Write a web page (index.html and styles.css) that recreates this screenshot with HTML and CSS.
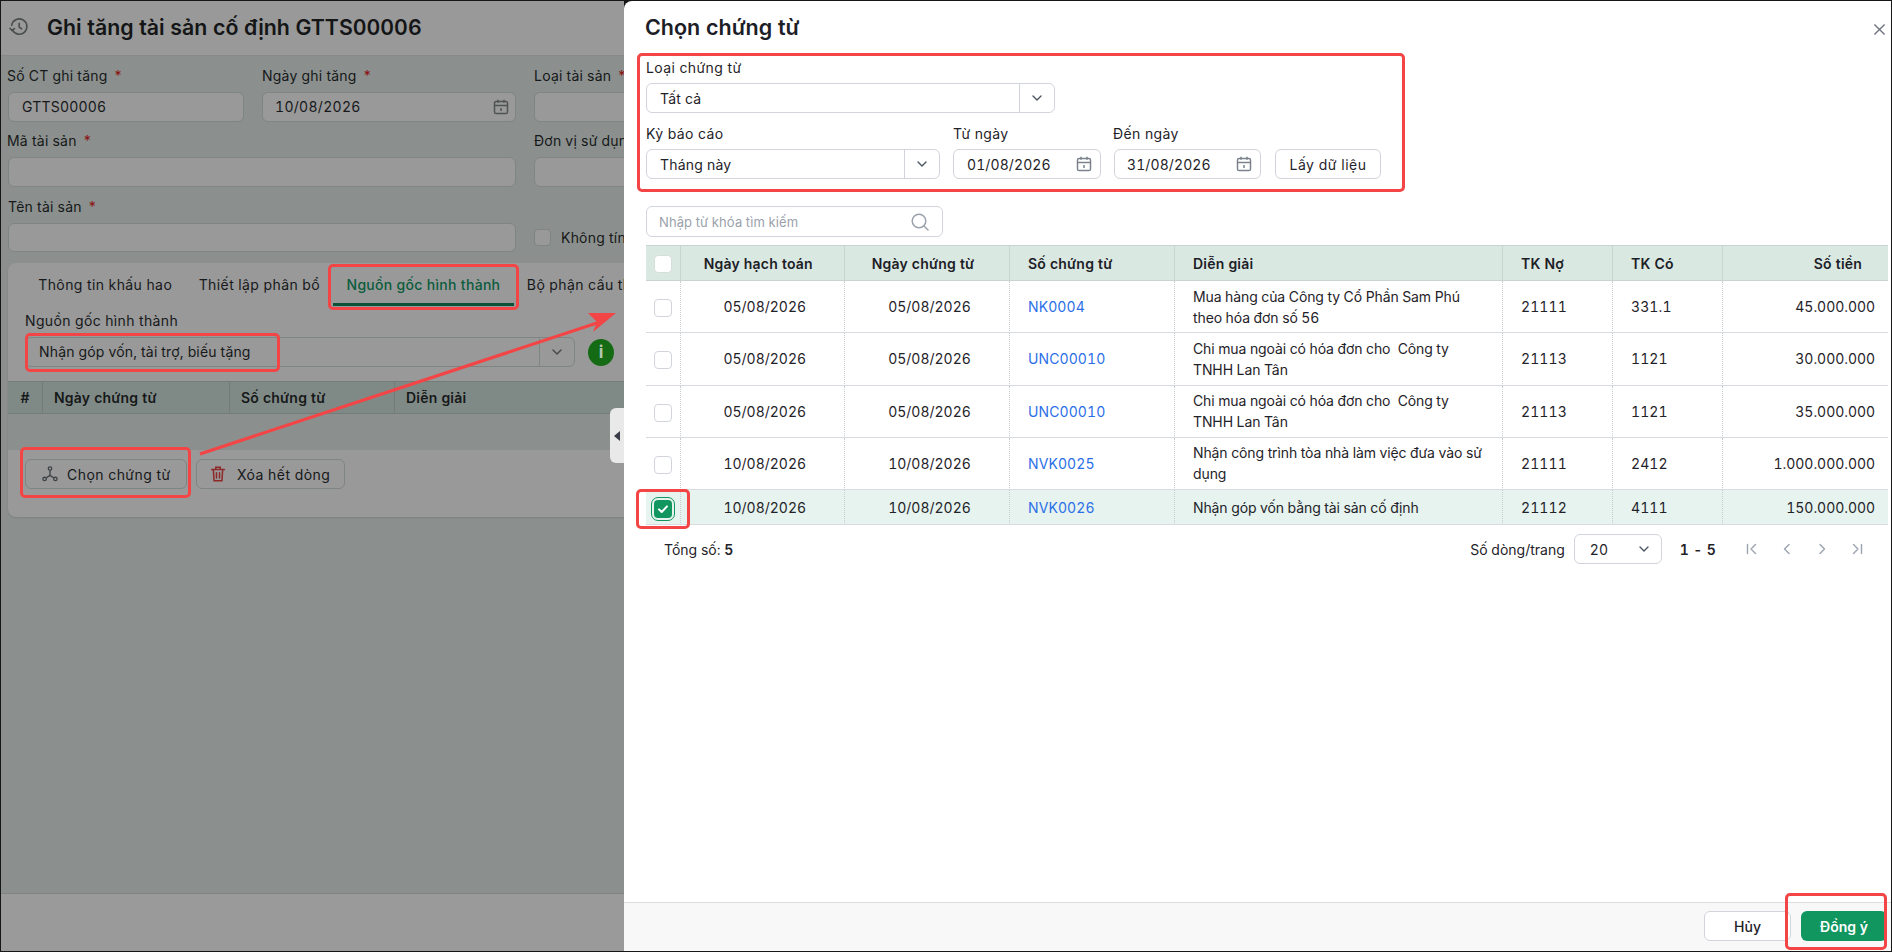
FILE: index.html
```html
<!DOCTYPE html>
<html lang="vi">
<head>
<meta charset="utf-8">
<title>Ghi tăng tài sản cố định</title>
<link rel="stylesheet" href="styles.css">
</head>
<body>
<div class="screen">
  <div class="shell">
    <section class="page">
      <header class="page-head">
        <svg class="history" viewBox="0 0 24 24" fill="none" stroke="#4a4d4d" stroke-width="1.9" stroke-linecap="round" stroke-linejoin="round"><path d="M4 15.500A9.200 9.200 0 1 0 3.200 10"/><path d="M1.200 13.500 3.600 16l3-2"/><path d="M12.200 7.500V12l3 2.200"/></svg>
        <h1>Ghi tăng tài sản cố định GTTS00006</h1>
      </header>
      <div class="page-body">
        <div class="form">
          <div class="field first"><label>Số CT ghi tăng <b>*</b></label><div class="box">GTTS00006</div></div>
          <div class="field"><label>Ngày ghi tăng <b>*</b></label><div class="box box-date"><span>10/08/2026</span>
            <svg class="cal" viewBox="0 0 16 16" fill="none" stroke="#4f5354" stroke-width="1.500"><rect x="1.500" y="2.500" width="13" height="12" rx="1.600"/><path d="M1.500 6.400h13M5 .8v3M11 .8v3M8 9v3"/></svg></div></div>
          <div class="field"><label>Loại tài sản <b>*</b></label><div class="box"></div></div>
          <div class="field first span2"><label>Mã tài sản <b>*</b></label><div class="box"></div></div>
          <div class="field"><label>Đơn vị sử dụng <b>*</b></label><div class="box"></div></div>
          <div class="field span2 r3"><label>Tên tài sản <b>*</b></label><div class="box"></div></div>
          <div class="check-line"><span class="dim-check"></span><span>Không tính khấu hao</span></div>
        </div>
        <div class="card">
          <nav class="tabs">
            <span class="tab">Thông tin khấu hao</span>
            <span class="tab">Thiết lập phân bổ</span>
            <span class="tab tab-on">Nguồn gốc hình thành</span>
            <span class="tab">Bộ phận cấu thành</span>
          </nav>
          <div class="origin">
            <label>Nguồn gốc hình thành</label>
            <div class="origin-line">
              <div class="box combo">
                <span class="combo-text">Nhận góp vốn, tài trợ, biếu tặng</span>
                <span class="combo-arrow"><svg viewBox="0 0 12 12" fill="none" stroke="#44484a" stroke-width="1.400" stroke-linecap="round" stroke-linejoin="round"><path d="M2 4l4 4 4-4"/></svg></span>
              </div>
              <span class="info">i</span>
            </div>
          </div>
          <div class="mini-head"><span class="mini-c">#</span><span>Ngày chứng từ</span><span>Số chứng từ</span><span>Diễn giải</span></div>
          <div class="mini-empty"></div>
          <div class="card-foot">
            <button class="dim-btn btn-choose"><svg viewBox="0 0 20 20" fill="none" stroke="#3f4346" stroke-width="1.500"><circle cx="10" cy="4" r="1.900"/><circle cx="4" cy="15.500" r="1.900"/><circle cx="16" cy="15.500" r="1.900"/><path d="M10 6v5.500M10 11.500l-4.400 2.900M10 11.500l4.400 2.900"/></svg>Chọn chứng từ</button>
            <button class="dim-btn btn-clear"><svg viewBox="0 0 20 20" fill="none" stroke="#8f2a2a" stroke-width="1.700" stroke-linecap="round"><path d="M3 5h14M7.500 5V2.600h5V5M4.800 5l.8 12.400h8.800L15.200 5M8.300 8.500v6M11.700 8.500v6"/></svg>Xóa hết dòng</button>
          </div>
        </div>
      </div>
      <footer class="page-foot"></footer>
    </section>

    <section class="drawer">
      <header class="drawer-head">
        <h2>Chọn chứng từ</h2>
        <svg class="close" viewBox="0 0 14 14" fill="none" stroke="#6f7480" stroke-width="1.500"><path d="M1.500 1.500l11 11M12.500 1.500l-11 11"/></svg>
      </header>
      <div class="drawer-body">
        <div class="filters">
          <div class="field-d wide1"><label>Loại chứng từ</label>
            <div class="input sel"><span>Tất cả</span><i class="sel-arrow"><svg viewBox="0 0 12 12" fill="none" stroke="#4b5563" stroke-width="1.400" stroke-linecap="round" stroke-linejoin="round"><path d="M2 4l4 4 4-4"/></svg></i></div>
          </div>
          <div class="filter-row">
            <div class="field-d wide2"><label>Kỳ báo cáo</label>
              <div class="input sel"><span>Tháng này</span><i class="sel-arrow"><svg viewBox="0 0 12 12" fill="none" stroke="#4b5563" stroke-width="1.400" stroke-linecap="round" stroke-linejoin="round"><path d="M2 4l4 4 4-4"/></svg></i></div>
            </div>
            <div class="field-d date"><label>Từ ngày</label>
              <div class="input dt"><span>01/08/2026</span><svg class="cal" viewBox="0 0 16 16" fill="none" stroke="#7b828c" stroke-width="1.500"><rect x="1.500" y="2.500" width="13" height="12" rx="1.600"/><path d="M1.500 6.400h13M5 .8v3M11 .8v3M8 9v3"/></svg></div>
            </div>
            <div class="field-d date date2"><label>Đến ngày</label>
              <div class="input dt"><span>31/08/2026</span><svg class="cal" viewBox="0 0 16 16" fill="none" stroke="#7b828c" stroke-width="1.500"><rect x="1.500" y="2.500" width="13" height="12" rx="1.600"/><path d="M1.500 6.400h13M5 .8v3M11 .8v3M8 9v3"/></svg></div>
            </div>
            <button class="btn-get">Lấy dữ liệu</button>
          </div>
        </div>
        <div class="search"><span>Nhập từ khóa tìm kiếm</span><svg viewBox="0 0 20 20" fill="none" stroke="#9aa1ab" stroke-width="1.500" stroke-linecap="round"><circle cx="9" cy="9" r="6.800"/><path d="M14 14l4 4"/></svg></div>
        <table class="grid">
          <colgroup><col class="c0"><col class="c1"><col class="c2"><col class="c3"><col class="c4"><col class="c5"><col class="c6"><col class="c7"></colgroup>
          <thead>
            <tr><th class="ck"><span class="box-ck head-ck"></span></th><th class="ctr">Ngày hạch toán</th><th class="ctr">Ngày chứng từ</th><th>Số chứng từ</th><th>Diễn giải</th><th>TK Nợ</th><th>TK Có</th><th class="rt">Số tiền</th></tr>
          </thead>
          <tbody>
            <tr><td class="ck"><span class="box-ck"></span></td><td class="ctr">05/08/2026</td><td class="ctr">05/08/2026</td><td><a>NK0004</a></td><td class="desc">Mua hàng của Công ty Cổ Phần Sam Phú<br>theo hóa đơn số 56</td><td>21111</td><td>331.1</td><td class="rt">45.000.000</td></tr>
            <tr><td class="ck"><span class="box-ck"></span></td><td class="ctr">05/08/2026</td><td class="ctr">05/08/2026</td><td><a>UNC00010</a></td><td class="desc">Chi mua ngoài có hóa đơn cho&nbsp; Công ty<br>TNHH Lan Tân</td><td>21113</td><td>1121</td><td class="rt">30.000.000</td></tr>
            <tr><td class="ck"><span class="box-ck"></span></td><td class="ctr">05/08/2026</td><td class="ctr">05/08/2026</td><td><a>UNC00010</a></td><td class="desc">Chi mua ngoài có hóa đơn cho&nbsp; Công ty<br>TNHH Lan Tân</td><td>21113</td><td>1121</td><td class="rt">35.000.000</td></tr>
            <tr><td class="ck"><span class="box-ck"></span></td><td class="ctr">10/08/2026</td><td class="ctr">10/08/2026</td><td><a>NVK0025</a></td><td class="desc">Nhận công trình tòa nhà làm việc đưa vào sử<br>dụng</td><td>21111</td><td>2412</td><td class="rt">1.000.000.000</td></tr>
            <tr class="picked"><td class="ck"><span class="box-ck on"><svg viewBox="0 0 14 14" fill="none" stroke="#fff" stroke-width="2" stroke-linecap="round" stroke-linejoin="round"><path d="M3 7.400l2.700 2.600L11 4.400"/></svg></span></td><td class="ctr">10/08/2026</td><td class="ctr">10/08/2026</td><td><a>NVK0026</a></td><td class="desc">Nhận góp vốn bằng tài sản cố định</td><td>21112</td><td>4111</td><td class="rt">150.000.000</td></tr>
          </tbody>
        </table>
        <div class="pager">
          <div class="total">Tổng số: <b>5</b></div>
          <div class="pager-right">
            <span>Số dòng/trang</span>
            <div class="page-size"><span>20</span><svg viewBox="0 0 12 12" fill="none" stroke="#4b5563" stroke-width="1.400" stroke-linecap="round" stroke-linejoin="round"><path d="M2 4l4 4 4-4"/></svg></div>
            <b class="range">1 - 5</b>
            <div class="nav">
              <svg viewBox="0 0 12 12" fill="none" stroke="#9aa3af" stroke-width="1.400" stroke-linecap="round" stroke-linejoin="round"><path d="M1.500 1.500v9M9.500 1.500 5 6l4.500 4.500"/></svg>
              <svg viewBox="0 0 12 12" fill="none" stroke="#9aa3af" stroke-width="1.400" stroke-linecap="round" stroke-linejoin="round"><path d="M8 1.500 3.500 6 8 10.500"/></svg>
              <svg viewBox="0 0 12 12" fill="none" stroke="#9aa3af" stroke-width="1.400" stroke-linecap="round" stroke-linejoin="round"><path d="M4 1.500 8.500 6 4 10.500"/></svg>
              <svg viewBox="0 0 12 12" fill="none" stroke="#9aa3af" stroke-width="1.400" stroke-linecap="round" stroke-linejoin="round"><path d="M2.500 1.500 7 6l-4.500 4.500M10.500 1.500v9"/></svg>
            </div>
          </div>
        </div>
      </div>
      <footer class="drawer-foot">
        <button class="btn-cancel">Hủy</button>
        <button class="btn-ok">Đồng ý</button>
      </footer>
    </section>
  </div>

  <div class="handle"><i></i></div>
  <svg class="arrow" viewBox="0 0 640 480"><path class="arrow-line" d="M200 454 600 322"/><path class="arrow-head" d="M616 313 588 313 597 322 593 332Z"/></svg>
  <div class="mark mark-tab"></div>
  <div class="mark mark-origin"></div>
  <div class="mark mark-choose"></div>
  <div class="mark mark-filter"></div>
  <div class="mark mark-check"></div>
  <div class="mark mark-ok"></div>
</div>
</body>
</html>
```

FILE: styles.css
```css
* { box-sizing: border-box; }
html, body { margin: 0; padding: 0; }
body { font-family: Inter, "Noto Sans", "Liberation Sans", sans-serif; font-size: 14px; color: #1f2329; overflow: hidden; font-variant-numeric: tabular-nums; }

.screen { position: relative; width: 1892px; height: 952px; padding: 1px; background: #161616; overflow: hidden; }
.shell { display: flex; height: 950px; }

/* dimmed page */
.page { width: 623px; flex: none; display: flex; flex-direction: column; background: #8b908e; overflow: hidden; color: #161819; }
.page-head { height: 55px; flex: none; display: flex; align-items: center; background: #999; border-bottom: 1px solid #858a88; padding: 0 0 3px 8px; }
.history { width: 20px; height: 20px; margin-right: 18px; flex: none; }
.page-head h1 { margin: 0; font-size: 21.300px; font-weight: 600; white-space: nowrap; color: #141516; }
.page-body { flex: 1; padding: 10px 0 0 7px; overflow: hidden; }
.page-foot { height: 58px; flex: none; background: #9a9a9a; border-top: 1px solid #7f8482; }

.form { display: grid; grid-template-columns: 236px 254px 360px; column-gap: 18px; row-gap: 9px; width: 900px; }
.field label, .origin label { display: block; line-height: 20px; margin-bottom: 6px; white-space: nowrap; letter-spacing: .22px; }
.field.first label { margin-left: -1px; }
.field b { color: #8c0f0f; font-weight: 400; margin-left: 2px; }
.span2 { grid-column: span 2; }
.r3 { margin-top: 1px; }
.r3 .box { height: 29px; }
.box { height: 30px; background: #999; border: 1px solid #7f8583; border-radius: 6px; line-height: 28px; padding-left: 13px; display: flex; align-items: center; letter-spacing: .2px; }
.box-date { justify-content: space-between; padding: 0 6px 0 12px; }
.box-date span { letter-spacing: .3px; }
.box .cal { width: 16px; height: 16px; }
.check-line { display: flex; align-items: center; gap: 10px; align-self: end; height: 30px; white-space: nowrap; letter-spacing: .22px; }
.dim-check { width: 17px; height: 17px; border: 1px solid #7f8583; border-radius: 4px; background: #999; }

.card { margin-top: 11px; width: 800px; background: #999; border-radius: 8px; height: 254px; overflow: hidden; box-shadow: 0 1px 2px rgba(0,0,0,.12); }
.tabs { display: flex; height: 43px; padding-left: 17px; }
.tab { padding: 0 13.250px; line-height: 44px; white-space: nowrap; letter-spacing: .4px; }
.tab-on { color: #0b5c3c; font-weight: 500; letter-spacing: .3px; border-bottom: 3px solid #0b5236; }
.origin { padding: 5px 0 0 17px; }
.origin label { margin-bottom: 6px; letter-spacing: .36px; }
.origin-line { display: flex; align-items: center; gap: 13px; }
.combo { width: 550px; padding: 0; justify-content: space-between; letter-spacing: .16px; }
.combo-text { padding-left: 13px; }
.combo-arrow { width: 35px; height: 28px; border-left: 1px solid #7f8583; display: flex; align-items: center; justify-content: center; }
.combo-arrow svg { width: 12px; height: 12px; }
.info { width: 26px; height: 27px; border-radius: 50%; background: #156b14; color: #b6c8b2; font-weight: 700; font-size: 17px; text-align: center; line-height: 27px; }
.mini-head { margin-top: 14px; height: 33px; display: grid; grid-template-columns: 34px 187px 165px 1fr; background: #7f8a86; font-weight: 600; letter-spacing: .2px; border-top: 1px solid #737c79; border-bottom: 1px solid #737c79; line-height: 31px; }
.mini-head span { padding-left: 11px; border-left: 1px solid #737c79; white-space: nowrap; }
.mini-head .mini-c { padding: 0; border: 0; text-align: center; }
.mini-empty { height: 36px; background: #8b908e; }
.card-foot { display: flex; gap: 9px; padding: 9px 0 0 17px; }
.dim-btn { height: 30px; display: flex; align-items: center; background: transparent; border: 1px solid #7f8583; border-radius: 6px; font: inherit; color: #161819; letter-spacing: .45px; white-space: nowrap; }
.dim-btn svg { width: 18px; height: 18px; flex: none; }
.btn-choose { width: 162px; gap: 8px; padding: 0 0 0 15px; }
.btn-clear { width: 149px; gap: 10px; padding: 0 0 0 12px; }

/* drawer */
.drawer { flex: 1; min-width: 0; display: flex; flex-direction: column; background: #fff; border-radius: 8px 0 0 8px; }
.drawer-head { height: 57px; flex: none; display: flex; justify-content: space-between; padding: 14px 5px 0 21px; }
.drawer-head h2 { margin: 0; font-size: 21.500px; line-height: 24px; font-weight: 600; color: #1c2026; }
.close { width: 13px; height: 13px; margin-top: 8px; }
.drawer-body { flex: 1; padding: 0 2px 0 22px; overflow: hidden; }
.field-d label { display: block; line-height: 20px; margin-bottom: 5px; white-space: nowrap; letter-spacing: .4px; }
.wide1 { width: 409px; }
.filter-row { display: flex; align-items: flex-end; margin-top: 11px; }
.wide2 { width: 294px; margin-right: 13px; }
.date { width: 148px; margin-right: 13px; }
.date2 { width: 147px; margin-right: 14px; }
.date2 label { margin-left: -1px; }
.input { height: 30px; border: 1px solid #d1d5db; border-radius: 6px; display: flex; align-items: center; justify-content: space-between; letter-spacing: .2px; }
.sel span { padding-left: 13px; }
.sel-arrow { width: 35px; height: 28px; border-left: 1px solid #d1d5db; display: flex; align-items: center; justify-content: center; }
.sel-arrow svg { width: 12px; height: 12px; }
.dt { padding: 0 8px 0 13px; letter-spacing: .1px; }
.date2 .dt { padding-left: 12px; }
.dt .cal { width: 16px; height: 16px; }
.btn-get { height: 30px; width: 106px; background: #fff; border: 1px solid #d1d5db; border-radius: 6px; font: inherit; color: #1f2329; letter-spacing: .5px; padding: 0; }

.search { margin-top: 27px; width: 297px; height: 31px; border: 1px solid #d1d5db; border-radius: 6px; display: flex; align-items: center; justify-content: space-between; padding: 0 13px 0 12px; color: #9aa1ab; font-size: 13px; letter-spacing: .1px; }
.search svg { width: 20px; height: 20px; margin-right: -1px; }

.grid { margin-top: 8px; width: 1242px; table-layout: fixed; border-collapse: separate; border-spacing: 0; }
.c0 { width: 34.500px; } .c1 { width: 164.500px; } .c2, .c3 { width: 165px; } .c4 { width: 328px; } .c5, .c6 { width: 110px; } .c7 { width: 165px; }
.grid th { height: 36px; background: #dae8e2; font-weight: 600; text-align: left; padding: 0 18px; border-top: 1px solid #c9d4d2; border-bottom: 1px solid #c9d4d2; border-right: 1px solid #c9d4d2; white-space: nowrap; color: #1c2026; letter-spacing: .2px; }
.grid th:last-child { border-right: 0; }
.grid th.ck { padding: 0; text-align: center; }
.grid th.ctr { text-align: center; padding: 0 8px 0 0; }
.grid th.rt { text-align: right; padding-right: 26px; }
.grid td { padding: 4.500px 18px; line-height: 21.125px; border-bottom: 1px solid #d8dbdf; border-right: 1px dotted #c8ccd0; vertical-align: middle; white-space: nowrap; letter-spacing: .1px; }
.grid td:last-child { border-right: 0; }
.grid td.ck { padding-left: 0; padding-right: 0; text-align: center; }
.grid td.ctr { text-align: center; padding-left: 5px; padding-right: 0; letter-spacing: 0; }
.grid td.desc { letter-spacing: -.11px; }
.grid td.rt { text-align: right; padding-right: 13px; letter-spacing: -.05px; }
.grid a { color: #2b6fe8; }
.grid .picked td { background: #e6f3ee; padding-top: 6.500px; padding-bottom: 6.500px; }
.box-ck { display: inline-flex; width: 18px; height: 18px; border: 1px solid #d1d5db; border-radius: 4px; background: #fff; vertical-align: middle; align-items: center; justify-content: center; }
.head-ck { border-color: #d5dedb; }
.box-ck.on { background: #12965f; border: 0; outline: 1px solid #12965f; outline-offset: 2px; }
.box-ck.on svg { width: 14px; height: 14px; }

.pager { display: flex; justify-content: space-between; align-items: center; height: 48px; padding: 0 26px 0 18px; }
.total b { font-weight: 600; }
.pager-right { display: flex; align-items: center; }
.page-size { width: 88px; height: 30px; margin-left: 9px; border: 1px solid #d1d5db; border-radius: 6px; display: flex; align-items: center; justify-content: space-between; padding: 0 11px 0 15px; }
.page-size svg { width: 12px; height: 12px; }
.range { font-weight: 600; margin: 0 30px 0 18px; white-space: nowrap; letter-spacing: .3px; }
.nav { display: flex; gap: 23px; }
.nav svg { width: 12px; height: 12px; }

.drawer-foot { height: 49px; flex: none; display: flex; justify-content: flex-end; gap: 10px; padding: 8px 4px 0 0; background: #f8f8f8; border-top: 1px solid #dcdcdc; }
.btn-cancel, .btn-ok { height: 30px; border-radius: 6px; font: inherit; padding: 0; }
.btn-cancel { width: 87px; background: #fff; border: 1px solid #d1d5db; color: #1f2329; font-weight: 500; }
.btn-ok { width: 86px; background: #12965f; border: 0; color: #fff; font-weight: 600; }

/* overlays */
.handle { position: absolute; left: 610px; top: 408px; width: 14px; height: 55px; background: #e9e9e9; border-radius: 6px 0 0 6px; display: flex; align-items: center; justify-content: center; }
.handle i { width: 0; height: 0; border-style: solid; border-width: 5px 6px 5px 0; border-color: transparent #3a3d48 transparent transparent; }
.arrow { position: absolute; left: 0; top: 0; width: 640px; height: 480px; }
.arrow-line { fill: none; stroke: #f34545; stroke-width: 3.200; }
.arrow-head { fill: #f34545; }
.mark { position: absolute; border: 3px solid #f34545; border-radius: 5px; }
.mark-tab { left: 328px; top: 264px; width: 191px; height: 46px; }
.mark-origin { left: 25px; top: 333px; width: 255px; height: 39px; }
.mark-choose { left: 20px; top: 447px; width: 171px; height: 51px; }
.mark-filter { left: 637px; top: 53px; width: 768px; height: 139px; }
.mark-check { left: 636px; top: 489px; width: 54px; height: 40px; }
.mark-ok { left: 1785px; top: 893px; width: 102px; height: 57px; }
```
